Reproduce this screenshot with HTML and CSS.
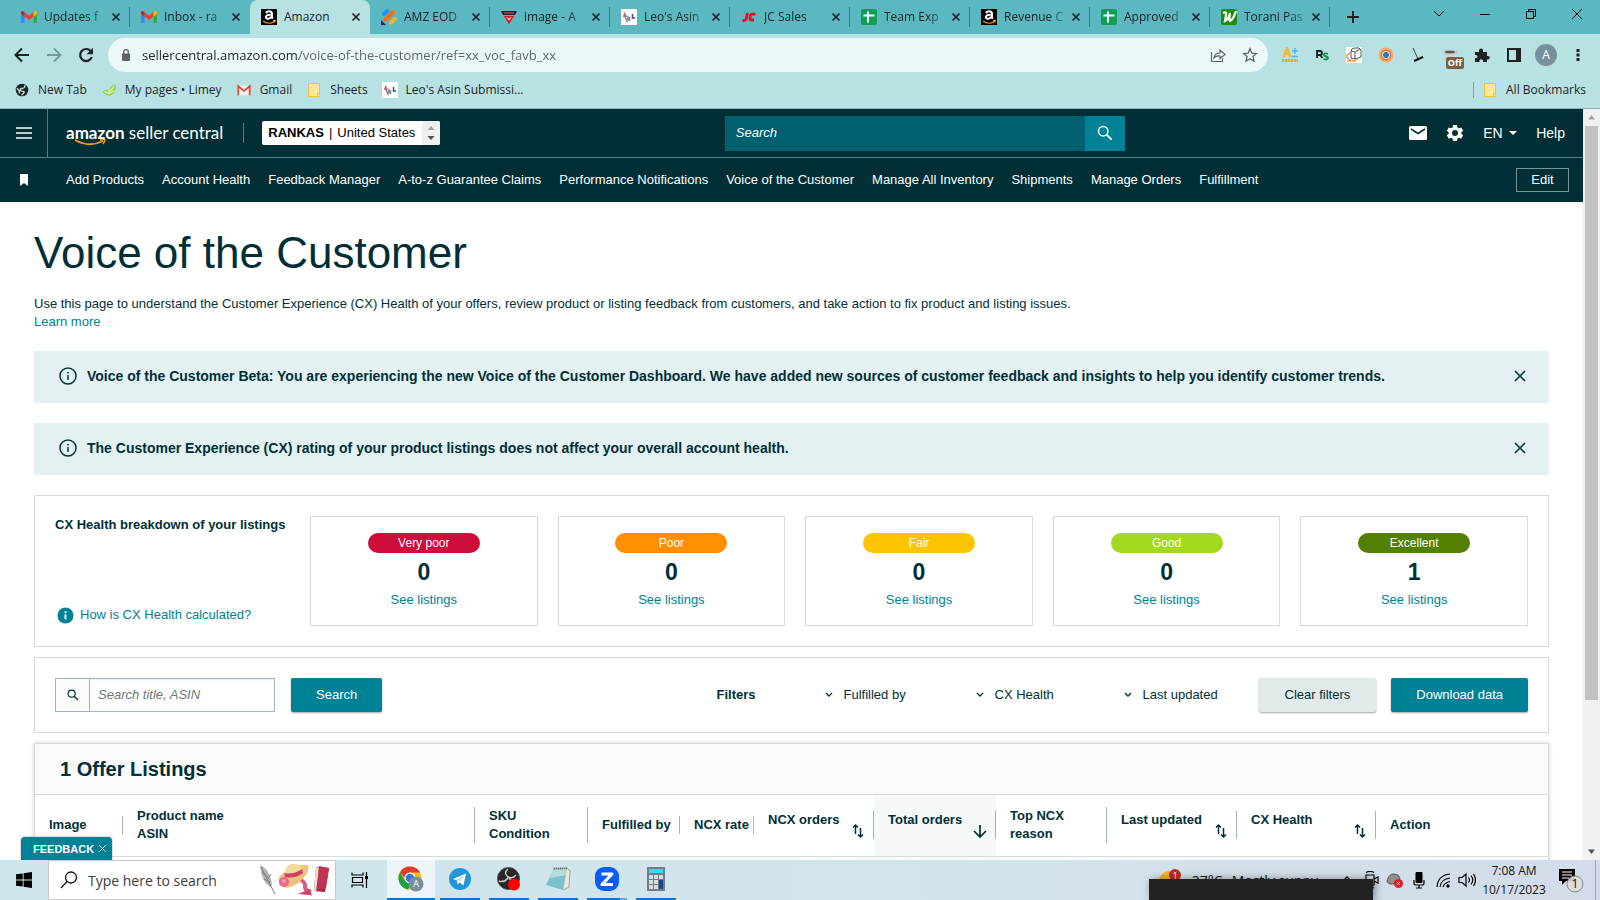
FILE: index.html
```html
<!DOCTYPE html>
<html lang="en">
<head>
    <meta charset="UTF-8">
    <meta name="viewport" content="width=device-width, initial-scale=1.0">
    <title>Amazon</title>
    <link rel="stylesheet" href="styles.css">
</head>
<body>
    <!-- shared icons -->
    <svg class="sprite" aria-hidden="true">
        <symbol id="i-gmail" viewBox="0 0 16 12">
            <path d="M0 1.5V11a1 1 0 0 0 1 1h2.600V5.200z" fill="#4285f4"/>
            <path d="M16 1.500V11a1 1 0 0 1-1 1h-2.600V5.200z" fill="#34a853"/>
            <path d="M12.400 1.700V5.800L16 3V1.500C16 .2 14.600-.5 13.500.4z" fill="#fbbc04"/>
            <path d="M3.600 5.800V1.200L8 4.500l4.400-3.300v4.600L8 9z" fill="#ea4335"/>
            <path d="M0 1.500V3l3.600 2.800V1.200L2.500.4C1.400-.5 0 .2 0 1.500z" fill="#c5221f"/>
        </symbol>
        <symbol id="i-amazon" viewBox="0 0 16 16">
            <path d="M0 0h16v16H0z" fill="#000"/>
            <path d="M5.200 4.300c.3-1.300 1.300-2 2.900-2 1.800 0 2.900.9 2.900 2.500v3.800l.8 1" fill="none" stroke="#fff" stroke-width="2"/>
            <path d="M9.800 5.800c-3 0-4.800.6-4.800 2.300 0 2.400 4.300 2.200 5-.5" fill="none" stroke="#fff" stroke-width="2"/>
            <path d="M2 12c3.500 2.700 8 2.700 11.500.4M12 11.600l2.200-.1-.6 2" fill="none" stroke="#f90" stroke-width="1.200"/>
        </symbol>
        <symbol id="i-sheet" viewBox="0 0 16 16">
            <rect width="16" height="16" rx="2" fill="#0f9d58"/>
            <path d="M2.500 6.500h11M7 2.500v11" stroke="#fff" stroke-width="2"/>
        </symbol>
        <symbol id="i-leo" viewBox="0 0 16 16">
            <path d="M0 0h16v16H0z" fill="#fff"/>
            <path d="M2 8l1.500-5L6 8z" fill="#e0434b"/>
            <path d="M3 6l3 6 1-4 1.500 4V8" fill="none" stroke="#8a8a93" stroke-width="1.500"/>
            <path d="M11.500 5v4H14" fill="none" stroke="#2c4ea0" stroke-width="1.500"/>
        </symbol>
        <symbol id="i-x" viewBox="0 0 10 10"><path d="M1.500 1.500l7 7m0-7l-7 7" stroke="currentColor" stroke-width="1.700"/></symbol>
        <symbol id="i-folder" viewBox="0 0 12 14">
            <path d="M.5.5h11v9.500h-1v3.500H.5z" fill="#ffe694" stroke="#e9c44c"/>
            <path d="M9.500 13.500v-3h2v3z" fill="#ffe694" stroke="#e9c44c"/>
        </symbol>
        <symbol id="i-search" viewBox="0 0 16 16"><circle cx="6.200" cy="6.200" r="4.700" fill="none" stroke="currentColor" stroke-width="1.500"/><path d="M9.600 9.600l5 5" stroke="currentColor" stroke-width="1.800"/></symbol>
        <symbol id="i-info" viewBox="0 0 18 18"><circle cx="9" cy="9" r="8" fill="none" stroke="currentColor" stroke-width="1.500"/><path d="M9 8v5M9 5v1.500" stroke="currentColor" stroke-width="1.500"/></symbol>
        <symbol id="i-close" viewBox="0 0 14 14"><path d="M2 2l10 10m0-10L2 12" stroke="currentColor" stroke-width="1.500"/></symbol>
        <symbol id="i-down" viewBox="0 0 8 6"><path d="M1 1l3 3 3-3" fill="none" stroke="currentColor" stroke-width="1.300"/></symbol>
        <symbol id="i-sort" viewBox="0 0 12 16"><path d="M3.500 11V2M1 4.500L3.500 2 6 4.500M8.500 5v9M6 11.500L8.500 14l2.500-2.500" fill="none" stroke="currentColor" stroke-width="1.500"/></symbol>
    </svg>

    <header class="browser">
        <div class="tabstrip">
            <div class="tab"><svg class="fav short"><use href="#i-gmail"/></svg><span class="tab-title">Updates f</span><button class="tab-close" aria-label="Close tab"><svg><use href="#i-x"/></svg></button></div>
            <div class="tab before-active"><svg class="fav short"><use href="#i-gmail"/></svg><span class="tab-title">Inbox - ra</span><button class="tab-close" aria-label="Close tab"><svg><use href="#i-x"/></svg></button></div>
            <div class="tab active"><svg class="fav"><use href="#i-amazon"/></svg><span class="tab-title">Amazon</span><button class="tab-close" aria-label="Close tab"><svg><use href="#i-x"/></svg></button></div>
            <div class="tab">
                <svg class="fav" viewBox="0 0 16 16"><g stroke-width="4" stroke-linecap="round"><path d="M3 5l3-3" stroke="#1e96fc"/><path d="M4.500 10.500L12 3" stroke="#ff6a13"/><path d="M10 13.500l3.500-3.500" stroke="#ffb224"/></g><path d="M0 11l5 5H0z" fill="#16206b"/></svg>
                <span class="tab-title">AMZ EOD</span><button class="tab-close" aria-label="Close tab"><svg><use href="#i-x"/></svg></button>
            </div>
            <div class="tab">
                <svg class="fav" viewBox="0 0 16 16"><path d="M0 2h16l-2 4H2z" fill="#2b1a24"/><path d="M3 7h10l-5 8z" fill="#e8101c"/><path d="M3 4h10" stroke="#e46a78"/><path d="M6 8l2 3 2-3" fill="none" stroke="#fff"/></svg>
                <span class="tab-title">image - A</span><button class="tab-close" aria-label="Close tab"><svg><use href="#i-x"/></svg></button>
            </div>
            <div class="tab"><svg class="fav"><use href="#i-leo"/></svg><span class="tab-title">Leo's Asin</span><button class="tab-close" aria-label="Close tab"><svg><use href="#i-x"/></svg></button></div>
            <div class="tab">
                <svg class="fav" viewBox="0 0 16 16"><path d="M6.500 4L5 10.500q-.4 1.500-3.500 1M14.500 5.200H11q-1.500.2-2 3-.4 2.700 1.200 2.800H13" fill="none" stroke="#e0141e" stroke-width="2.800"/></svg>
                <span class="tab-title">JC Sales</span><button class="tab-close" aria-label="Close tab"><svg><use href="#i-x"/></svg></button>
            </div>
            <div class="tab"><svg class="fav"><use href="#i-sheet"/></svg><span class="tab-title">Team Exp</span><button class="tab-close" aria-label="Close tab"><svg><use href="#i-x"/></svg></button></div>
            <div class="tab"><svg class="fav"><use href="#i-amazon"/></svg><span class="tab-title">Revenue C</span><button class="tab-close" aria-label="Close tab"><svg><use href="#i-x"/></svg></button></div>
            <div class="tab"><svg class="fav"><use href="#i-sheet"/></svg><span class="tab-title">Approved</span><button class="tab-close" aria-label="Close tab"><svg><use href="#i-x"/></svg></button></div>
            <div class="tab">
                <svg class="fav" viewBox="0 0 16 16"><rect width="16" height="16" rx="2" fill="#1d8a12"/><path d="M2 4q4-2 3 2l-1 6q4-2 5-8-1 5 0 8 3-1 6-10" fill="none" stroke="#fff" stroke-width="2.200"/></svg>
                <span class="tab-title">Torani Pas</span><button class="tab-close" aria-label="Close tab"><svg><use href="#i-x"/></svg></button>
            </div>
            <button class="new-tab" aria-label="New tab"><svg viewBox="0 0 14 14"><path d="M7 1v12M1 7h12" stroke="currentColor" stroke-width="2"/></svg></button>
            <div class="window-buttons">
                <button aria-label="Search tabs"><svg viewBox="0 0 12 12"><path d="M1 3l5 5 5-5" fill="none" stroke="currentColor"/></svg></button>
                <button aria-label="Minimize"><svg viewBox="0 0 12 12"><path d="M1 6.500h10" stroke="currentColor"/></svg></button>
                <button aria-label="Restore"><svg viewBox="0 0 12 12"><path d="M1.500 3.500h7v7h-7zM3.500 3.500v-2h7v7h-2" fill="none" stroke="currentColor"/></svg></button>
                <button aria-label="Close"><svg viewBox="0 0 12 12"><path d="M1 1l10 10m0-10L1 11" stroke="currentColor"/></svg></button>
            </div>
        </div>

        <div class="toolbar">
            <button aria-label="Back"><svg viewBox="0 0 16 16"><path d="M15 8H2M8 1.500L1.500 8 8 14.500" fill="none" stroke="currentColor" stroke-width="2"/></svg></button>
            <button class="disabled" aria-label="Forward"><svg viewBox="0 0 16 16"><path d="M1 8h13M8 1.500L14.500 8 8 14.500" fill="none" stroke="currentColor" stroke-width="1.800"/></svg></button>
            <button aria-label="Reload"><svg viewBox="0 0 16 16"><path d="M13.800 10A6 6 0 1 1 12.600 4" fill="none" stroke="currentColor" stroke-width="2.200"/><path d="M15 .8v6.400H8.600z" fill="currentColor"/></svg></button>
            <div class="omnibox">
                <svg class="lock" viewBox="0 0 10 12"><path d="M1 4.500h8V11a1 1 0 0 1-1 1H2a1 1 0 0 1-1-1z" fill="currentColor"/><path d="M2.700 5V3a2.300 2.300 0 0 1 4.600 0v2" fill="none" stroke="currentColor" stroke-width="1.300"/></svg>
                <input class="url" type="text" aria-label="Address" value="sellercentral.amazon.com/voice-of-the-customer/ref=xx_voc_favb_xx">
                <button aria-label="Share"><svg viewBox="0 0 16 16"><path d="M1.500 5v9.500h11V11M4 11q.5-5 6-5V3l5 4.500-5 4V9Q6 8.500 4 11z" fill="none" stroke="currentColor" stroke-width="1.200"/></svg></button>
                <button aria-label="Bookmark this tab"><svg viewBox="0 0 16 16"><path d="M8 1.800l1.800 4.300 4.700.4-3.600 3.100 1.100 4.600-4-2.500-4 2.500 1.100-4.600L1.500 6.500l4.700-.4z" fill="none" stroke="currentColor" stroke-width="1.300"/></svg></button>
            </div>
            <div class="extensions">
                <button aria-label="A plus Scout"><svg viewBox="0 0 16 16"><path d="M1.500 10L5 1.500 8.500 10M2.800 7h4.400" fill="none" stroke="#fbb52b" stroke-width="2.400"/><path d="M10 4h6M13 1v6M10 9.500h6" stroke="#4cbbe5" stroke-width="1.500"/><path d="M0 13.500h16" stroke="#f5a52a" stroke-width="3" stroke-dasharray="2.500 .5"/></svg></button>
                <button aria-label="RevSeller"><svg viewBox="0 0 16 16"><path d="M3 11V4h3q2 0 2 2t-2 2H3m3 0l2.500 3" fill="none" stroke="#1b1b1b" stroke-width="1.800"/><path d="M14 7q-4-1.500-4 .8 0 1.500 2 1.700 2.200.2 2 1.800-.5 2-4.500.7" fill="none" stroke="#0b9447" stroke-width="1.800"/></svg></button>
                <button aria-label="Box price"><svg viewBox="0 0 16 16"><path d="M0 0h16v16H0z" fill="#fff"/><path d="M5 4q0-3 4-3 5-1 6 2v7l-6 2-4-1zM5 4l4 1 5-3M9 5v7" fill="none" stroke="#555"/><path d="M4 6Q0 8 1 11q5 5 11 1M1 14h8" fill="none" stroke="#f3a14a" stroke-width="1.500"/></svg></button>
                <button aria-label="Color picker"><svg viewBox="0 0 16 16"><circle cx="8" cy="8" r="7.500" fill="#f7a96a"/><circle cx="8" cy="8" r="5.500" fill="#f4802f"/><circle cx="8" cy="8" r="3.700" fill="#fff"/><circle cx="8" cy="8" r="3" fill="#1a7fc4"/></svg></button>
                <button aria-label="Sweeper"><svg viewBox="0 0 16 16"><path d="M3 1l5 11" stroke="#444"/><path d="M4 14l9-4" stroke="#111" stroke-width="2"/></svg></button>
                <button class="with-badge" aria-label="Keepa"><svg viewBox="0 0 16 16"><path d="M2 4h12l-1 10H3z" fill="#d3d3d3"/><ellipse cx="8" cy="5" rx="7.500" ry="2.500" fill="#c2c2c2"/><ellipse cx="8" cy="5" rx="5" ry="1.300" fill="#555"/></svg><span class="badge">Off</span></button>
                <button aria-label="Extensions"><svg viewBox="0 0 16 16"><path d="M1 5h4V3.500a2 2 0 0 1 4 0V5h4v4h1a1.700 1.700 0 0 1 0 3.500h-1V15H9v-1a1.800 1.800 0 0 0-3.600 0v1H1v-4h1a1.500 1.500 0 0 0 0-3H1z" fill="currentColor"/></svg></button>
                <button aria-label="Side panel"><svg viewBox="0 0 16 16"><path d="M2 2h12v12H2z" fill="none" stroke="currentColor" stroke-width="2"/><path d="M10 2h4v12h-4z" fill="currentColor"/></svg></button>
                <button class="profile" aria-label="Profile">A</button>
                <button aria-label="Menu"><svg viewBox="0 0 16 16"><path d="M6.500 2h3v3h-3zM6.500 6.500h3v3h-3zM6.500 11h3v3h-3z" fill="currentColor"/></svg></button>
            </div>
        </div>

        <nav class="bookmarks" aria-label="Bookmarks">
            <a href="#"><svg viewBox="0 0 16 16"><circle cx="8" cy="8" r="7.200" fill="#202124"/><path d="M11 2.500q1 3-2 3.500-3 0-3 2 1 2 3.500 1.500 2 .5 0 2.500l-2 2M2 6l3 3v3" fill="none" stroke="#b8e1e4" stroke-width="1.600"/></svg>New Tab</a>
            <a href="#"><svg viewBox="0 0 16 16"><path d="M1 10Q7 9 14.500 1.500 17 8 12 12.500 6 16 1 10z" fill="#a6db5d" stroke="#8bca47"/><path d="M8 12l6-9M8 12l6-3M8 12V6M8 12L3 10" stroke="#e8f7d4"/></svg>My pages • Limey</a>
            <a href="#"><svg viewBox="0 0 16 16"><path d="M1 3h14v11H1z" fill="#f1f1f1"/><path d="M1.500 14V3.500L8 9l6.500-5.500V14" fill="none" stroke="#e04436" stroke-width="2"/></svg>Gmail</a>
            <a href="#"><svg><use href="#i-folder"/></svg>Sheets</a>
            <a href="#"><svg class="square"><use href="#i-leo"/></svg>Leo's Asin Submissi...</a>
            <a class="all-bookmarks" href="#"><svg><use href="#i-folder"/></svg>All Bookmarks</a>
        </nav>
    </header>

    <div class="viewport">
        <div class="page">
            <div class="sc-header">
                <button class="sc-menu" aria-label="Menu"><svg viewBox="0 0 16 12"><path d="M0 1h16M0 6h16M0 11h16" stroke="currentColor" stroke-width="1.500"/></svg></button>
                <a class="logo" href="#"><b>amazon</b> seller central
                    <svg viewBox="0 0 34 8"><path d="M1 1q14 8 28 1" fill="none" stroke="#f90" stroke-width="1.800"/><path d="M26 1q5-1 5 0t-2 4" fill="none" stroke="#f90" stroke-width="1.400"/></svg>
                </a>
                <label class="account"><b>RANKAS</b><span class="bar">|</span>
                    <select><option>United States</option></select>
                    <span class="spin"><svg viewBox="0 0 8 16"><path d="M4 1l3.500 4h-7z" fill="#a3a3a3"/><path d="M4 15l3.500-4h-7z" fill="#505050"/></svg></span>
                </label>
                <form class="sc-search">
                    <input type="text" placeholder="Search" aria-label="Search">
                    <button type="button" aria-label="Search"><svg><use href="#i-search"/></svg></button>
                </form>
                <div class="sc-tools">
                    <button aria-label="Messages"><svg viewBox="0 0 18 18"><rect y="2" width="18" height="14" rx="1.500" fill="currentColor"/><path d="M2 5l7 4.500L16 5" fill="none" stroke="#002f36" stroke-width="1.500"/></svg></button>
                    <button aria-label="Settings"><svg viewBox="0 0 18 18"><path d="M7 1h4l.4 2.400 1.500.9 2.300-.9 2 3.400-1.900 1.500v1.500l1.900 1.500-2 3.400-2.300-.9-1.500.9L11 17H7l-.4-2.300-1.500-.9-2.300.9-2-3.400 1.900-1.500V8.300L.8 6.800l2-3.400 2.300.9 1.500-.9z" fill="currentColor"/><circle cx="9" cy="9" r="3" fill="#002f36"/></svg></button>
                    <div class="lang"><select aria-label="Language"><option>EN</option></select><svg viewBox="0 0 8 4"><path d="M0 0h8L4 4z" fill="currentColor"/></svg></div>
                    <a href="#">Help</a>
                </div>
            </div>

            <nav class="sc-nav" aria-label="Favorites">
                <svg class="mark" viewBox="0 0 10 12"><path d="M1 0h8v12L5 9l-4 3z" fill="currentColor"/></svg>
                <a href="#">Add Products</a>
                <a href="#">Account Health</a>
                <a href="#">Feedback Manager</a>
                <a href="#">A-to-z Guarantee Claims</a>
                <a href="#">Performance Notifications</a>
                <a href="#">Voice of the Customer</a>
                <a href="#">Manage All Inventory</a>
                <a href="#">Shipments</a>
                <a href="#">Manage Orders</a>
                <a href="#">Fulfillment</a>
                <button class="edit">Edit</button>
            </nav>

            <main>
                <h1>Voice of the Customer</h1>
                <p class="intro">Use this page to understand the Customer Experience (CX) Health of your offers, review product or listing feedback from customers, and take action to fix product and listing issues.<br><a href="#">Learn more</a></p>

                <div class="alert">
                    <svg><use href="#i-info"/></svg>
                    <strong>Voice of the Customer Beta: You are experiencing the new Voice of the Customer Dashboard. We have added new sources of customer feedback and insights to help you identify customer trends.</strong>
                    <button aria-label="Dismiss"><svg><use href="#i-close"/></svg></button>
                </div>
                <div class="alert">
                    <svg><use href="#i-info"/></svg>
                    <strong>The Customer Experience (CX) rating of your product listings does not affect your overall account health.</strong>
                    <button aria-label="Dismiss"><svg><use href="#i-close"/></svg></button>
                </div>

                <section class="panel health">
                    <div class="health-intro">
                        <strong>CX Health breakdown of your listings</strong>
                        <a href="#"><svg viewBox="0 0 18 18"><circle cx="9" cy="9" r="8.500" fill="currentColor"/><path d="M9 8v5M9 4.500v2" stroke="#fff" stroke-width="2"/></svg>How is CX Health calculated?</a>
                    </div>
                    <div class="card"><span class="pill very-poor">Very poor</span><b>0</b><a href="#">See listings</a></div>
                    <div class="card"><span class="pill poor">Poor</span><b>0</b><a href="#">See listings</a></div>
                    <div class="card"><span class="pill fair">Fair</span><b>0</b><a href="#">See listings</a></div>
                    <div class="card"><span class="pill good">Good</span><b>0</b><a href="#">See listings</a></div>
                    <div class="card"><span class="pill excellent">Excellent</span><b>1</b><a href="#">See listings</a></div>
                </section>

                <section class="panel filters">
                    <label class="search-box">
                        <span><svg><use href="#i-search"/></svg></span>
                        <input type="text" placeholder="Search title, ASIN" aria-label="Search title, ASIN">
                    </label>
                    <button class="btn primary">Search</button>
                    <strong>Filters</strong>
                    <label class="filter"><svg><use href="#i-down"/></svg><select aria-label="Fulfilled by"><option>Fulfilled by</option></select></label>
                    <label class="filter"><svg><use href="#i-down"/></svg><select aria-label="CX Health"><option>CX Health</option></select></label>
                    <label class="filter"><svg><use href="#i-down"/></svg><select aria-label="Last updated"><option>Last updated</option></select></label>
                    <button class="btn clear">Clear filters</button>
                    <button class="btn primary">Download data</button>
                </section>

                <section class="offers">
                    <h2>1 Offer Listings</h2>
                    <table>
                        <thead>
                            <tr>
                                <th class="c-image"><div>Image</div></th>
                                <th><div>Product name<br>ASIN</div></th>
                                <th class="c-sku"><div>SKU<br>Condition</div></th>
                                <th class="c-fulfilled"><div>Fulfilled by</div></th>
                                <th class="c-rate"><div>NCX rate</div></th>
                                <th class="c-orders"><div><button class="sort">NCX orders<svg><use href="#i-sort"/></svg></button></div></th>
                                <th class="c-total sorted"><div><button class="sort">Total orders<svg viewBox="0 0 14 16"><path d="M7 2v12M1 8l6 6 6-6" fill="none" stroke="currentColor" stroke-width="1.700"/></svg></button></div></th>
                                <th class="c-reason"><div>Top NCX<br>reason</div></th>
                                <th class="c-updated"><div><button class="sort">Last updated<svg><use href="#i-sort"/></svg></button></div></th>
                                <th class="c-health"><div><button class="sort">CX Health<svg><use href="#i-sort"/></svg></button></div></th>
                                <th class="c-action"><div>Action</div></th>
                            </tr>
                        </thead>
                    </table>
                </section>
            </main>
        </div>
        <div class="scrollbar" aria-hidden="true">
            <svg viewBox="0 0 17 17"><path d="M8.500 6l3.500 4.500H5z" fill="#a3a3a3"/></svg>
            <div class="track"><div class="thumb"></div></div>
            <svg viewBox="0 0 17 17"><path d="M8.500 11L5 6.500h7z" fill="#505050"/></svg>
        </div>
        <button class="feedback">FEEDBACK <svg><use href="#i-close"/></svg></button>
    </div>

    <footer class="taskbar">
        <button class="start" aria-label="Start"><svg viewBox="0 0 16 16"><path d="M0 2.300L6.700 1.400v6.100H0zM7.600 1.200L16 0v7.500H7.600zM0 8.400h6.700v6.200L0 13.700zM7.600 8.400H16V16l-8.400-1.200z" fill="#000"/></svg></button>
        <label class="win-search">
            <svg class="glass" viewBox="0 0 18 18"><circle cx="11" cy="6.500" r="5.500" fill="none" stroke="#111" stroke-width="1.300"/><path d="M7 10.500l-6 6.500" stroke="#111" stroke-width="1.300"/></svg>
            <input type="text" placeholder="Type here to search" aria-label="Type here to search">
            <svg class="art" viewBox="0 0 72 34">
                <path d="M1 2q10 4 12 20l-2 2Q2 18 1 2z" fill="#b3b3b3"/><path d="M2 4l14 27M3 10l6 4M5 16l6 3M12 11l-3 5" stroke="#7d7d7d" fill="none"/>
                <path d="M38 15q9 4 8 8t6 6" fill="none" stroke="#dc5a80" stroke-width="4"/>
                <path d="M20 19Q18 13 26 9q5-9 14-7 5-1 10 1-1 10-11 17-12 9-19 1z" fill="#edc27b"/>
                <path d="M26 8q2-8 9-7 7 0 8 5-7 7-17 5z" fill="#f7d99a"/><path d="M25 10q9 2 18-4l1 4q-8 6-18 4z" fill="#cf3f66"/>
                <circle cx="25" cy="19" r="5" fill="#e96a83"/><circle cx="25" cy="18" r="2" fill="#f5a0ac"/>
                <path d="M39 31l12-5-1 6zM51 27l2 6-8-4" fill="#c94068"/>
                <path d="M57 4l13 1-4 24-11-1z" fill="#a82343"/><path d="M57 4l3 1-3 24-2-1z" fill="#eee3c8"/><path d="M60 3l10 2-3 20-9 2z" fill="#c13355"/>
            </svg>
        </label>
        <button class="task-view" aria-label="Task view"><svg viewBox="0 0 18 16"><path d="M1 .5V3h11V.5M1 15.500V13h11v2.500M1.500 5.500h10v5h-10zM15.500 0v16" fill="none" stroke="#000" stroke-width="1.200"/><path d="M14 4h3v3h-3z" fill="#000"/></svg></button>
        <div class="apps">
            <button class="app current" aria-label="Chrome"><svg viewBox="0 0 26 26"><circle cx="12" cy="12" r="11.500" fill="#fbc116"/><path d="M2 6.200A11.500 11.500 0 0 1 22 6.500H12q-5 .5-5.500 5z" fill="#e33b2e"/><path d="M2 6.200l5 8.500q2 3 6 2.500l-3 6.200A11.500 11.500 0 0 1 2 6.200z" fill="#23a047"/><circle cx="12" cy="12" r="5.400" fill="#fff"/><circle cx="12" cy="12" r="4.300" fill="#3179e3"/><circle cx="18" cy="18" r="7.500" fill="#78909c"/><text x="18" y="21" class="mini">A</text></svg></button>
            <button class="app" aria-label="Telegram"><svg viewBox="0 0 26 26"><circle cx="13" cy="13" r="11" fill="#2397d4"/><path d="M6 13l13-5.500-2.500 12-4-3-2 2-.5-4z" fill="#fff"/><path d="M10 14.500l6-4-4.500 5.500" fill="none" stroke="#9ccbe8"/></svg></button>
            <button class="app" aria-label="OBS"><svg viewBox="0 0 26 26"><circle cx="12.500" cy="12.500" r="11" fill="#26252a" stroke="#4d4d52"/><path d="M12 3q-5 4 0 8 5 2 8-2M12 12q-4 5-9 3M13 12q5 4 2 10" fill="none" stroke="#c9c9c9" stroke-width="1.500"/><circle cx="18" cy="18.500" r="6" fill="#f00"/></svg></button>
            <button class="app" aria-label="Notepad"><svg viewBox="0 0 26 26"><path d="M8 3l14-1 3 3-1 16-6 3z" fill="#eee9d8" stroke="#a6a08c"/><path d="M9 3l13 1-4 20-17-5z" fill="#7cc0cb"/><path d="M9 3l13 1-1 5L5 12z" fill="#b5dde1"/><path d="M9 2.500h13" stroke="#606a70" stroke-dasharray="1 1" stroke-width="2"/></svg></button>
            <button class="app split" aria-label="Zoom"><svg viewBox="0 0 26 26"><rect x="1" y="1" width="24" height="24" rx="9" fill="#0b5cff"/><path d="M7.500 8h10.500l-10 10.500h11" fill="none" stroke="#fff" stroke-width="3.200" stroke-linejoin="round"/></svg></button>
            <button class="app" aria-label="Calculator"><svg viewBox="0 0 26 26"><path d="M4 1h18v24H4z" fill="#747c85"/><path d="M6 3h14v4H6z" fill="#45d3f5"/><path d="M6 9h4v4H6zM11 9h4v4h-4zM16 9h4v4h-4zM6 14h4v4H6zM11 14h4v4h-4zM6 19h4v4H6zM11 19h4v4h-4z" fill="#d6dbe0"/><path d="M16 14h4v9h-4z" fill="#12498c"/></svg></button>
        </div>
        <div class="tray">
            <button class="weather"><svg viewBox="0 0 24 22"><circle cx="10" cy="12" r="10" fill="#f7b52c"/><circle cx="16" cy="6" r="6" fill="#c42b1c"/><text x="16" y="10" class="mini">1</text></svg><span>27°C</span><span>Mostly sunny</span></button>
            <svg class="tray-icon" viewBox="0 0 18 18"><path d="M4 11l5-5 5 5" fill="none" stroke="#000" stroke-width="1.300"/></svg>
            <svg class="tray-icon" viewBox="0 0 18 18"><path d="M4 4h8v10H4zM12 8l4-2v6l-4-2M4 1.500q4-2 8 0M4 16.500q4 2 8 0" fill="none" stroke="#000" stroke-width="1.200"/></svg>
            <svg class="tray-icon" viewBox="0 0 18 18"><path d="M4 13q-4-1-2.500-4.500Q3 3 8 3q5 0 6 4l-3 6z" fill="#8f8f8f" stroke="#555"/><circle cx="12.500" cy="12.500" r="4.500" fill="#e01b24"/><path d="M11 11l3 3m0-3l-3 3" stroke="#fff"/></svg>
            <svg class="tray-icon" viewBox="0 0 18 18"><rect x="5.500" y="1" width="7" height="11" rx="1" fill="#000"/><path d="M4 9v3q0 2 2 2h6q2 0 2-2V9M9 14v3M6 17h6" fill="none" stroke="#000" stroke-width="1.200"/></svg>
            <svg class="tray-icon" viewBox="0 0 18 18"><path d="M3 16Q4 4 16 3M6 16q1-8 10-9M9 16q1-4 7-5.500" fill="none" stroke="#000" stroke-width="1.200"/><circle cx="14" cy="15" r="1.700" fill="#000"/></svg>
            <svg class="tray-icon" viewBox="0 0 18 18"><path d="M1 6.500h3L8 3v12l-4-3.500H1zM10.500 6.500q2 2.500 0 5M13 4.500q3.500 4.500 0 9M15.500 3q4 6 0 12" fill="none" stroke="#000" stroke-width="1.200"/></svg>
            <div class="clock">7:08 AM<br>10/17/2023</div>
            <button class="notify" aria-label="Notifications"><svg viewBox="0 0 26 26"><path d="M1 2h16v12H8l-4 4v-4H1z" fill="#000"/><path d="M4 5h10M4 8h10M4 11h7" stroke="#fff"/><circle cx="17" cy="17" r="8" fill="#dcdcdc" fill-opacity=".9" stroke="#888"/><text x="17" y="21" class="count">1</text></svg></button>
        </div>
        <div class="overlay-window"></div>
    </footer>
</body>
</html>
```
FILE: styles.css
```css
:root {
    --ink: #002f36;
    --teal: #008296;
    --line: #d5dbdb;
    --chrome: #b8e1e4;
    --strip: #5bb8c1;
}

* {
    box-sizing: border-box;
}

body {
    margin: 0;
    height: 100vh;
    display: flex;
    flex-direction: column;
    overflow: hidden;
    background: #fff;
    color: var(--ink);
    font: 13px/18px "Liberation Sans", Arial, sans-serif;
}

button,
input,
select {
    font: inherit;
    color: inherit;
    margin: 0;
    padding: 0;
    border: 0;
    background: none;
    border-radius: 0;
}

select {
    appearance: none;
    cursor: pointer;
}

button {
    display: flex;
    align-items: center;
    justify-content: center;
    cursor: pointer;
}

a {
    color: var(--teal);
    text-decoration: none;
}

svg {
    flex: none;
    width: 16px;
    height: 16px;
}

.sprite {
    position: absolute;
    width: 0;
    height: 0;
}

/* browser chrome */
.browser {
    flex: none;
    background: var(--chrome);
    color: #202124;
    font: 12px/16px "Open Sans", "Noto Sans", sans-serif;
    border-bottom: 1px solid #8fb0b3;
}

.tabstrip {
    display: flex;
    height: 34px;
    padding-left: 10px;
    background: var(--strip);
}

.tab {
    flex: 0 1 120px;
    min-width: 0;
    display: flex;
    align-items: center;
    padding: 0 8px 0 11px;
    background: linear-gradient(#3d7d84, #3d7d84) right center / 1px 20px no-repeat;
}

.tab.before-active {
    background: none;
}

.tab.active {
    background: var(--chrome);
    border-radius: 8px 8px 0 0;
}

.fav {
    margin-right: 7px;
}

.fav.short {
    height: 12px;
}

.tab-title {
    flex: 1;
    white-space: nowrap;
    mask-image: linear-gradient(to right, #000 70%, rgba(0, 0, 0, 0.2));
}

.tab.active .tab-title {
    mask-image: none;
}

.tab-close {
    width: 12px;
    height: 16px;
    margin-left: 4px;
}

.tab-close svg {
    width: 10px;
    height: 10px;
}

.new-tab {
    width: 46px;
}

.new-tab svg {
    width: 14px;
    height: 14px;
}

.window-buttons {
    display: flex;
    margin-left: auto;
    height: 28px;
    color: #000;
}

.window-buttons button {
    width: 46px;
}

.window-buttons svg {
    width: 12px;
    height: 12px;
}

.toolbar {
    display: flex;
    align-items: center;
    height: 42px;
    padding-left: 6px;
}

.toolbar > button {
    width: 32px;
    height: 32px;
}

.toolbar .disabled {
    color: #74989c;
}

.omnibox {
    flex: 1;
    display: flex;
    align-items: center;
    height: 34px;
    margin-left: 6px;
    padding: 0 2px 0 13px;
    border-radius: 17px;
    background: #ebf8f9;
    color: #5f6368;
}

.omnibox button {
    width: 32px;
}

.lock {
    width: 10px;
    height: 12px;
    margin-right: 11px;
}

.url {
    flex: 1;
    font-size: 13px;
    color: #202124;
    background: linear-gradient(to right, #202124 157px, #5f6368 157px);
    background-clip: text;
    -webkit-text-fill-color: transparent;
}

.extensions {
    display: flex;
    align-items: center;
    padding: 0 6px;
}

.extensions button {
    width: 32px;
    height: 32px;
}

.with-badge {
    position: relative;
}

.badge {
    position: absolute;
    right: 2px;
    bottom: 2px;
    padding: 0 2px;
    border-radius: 2px;
    background: #7b6044;
    color: #fff;
    font: bold 9px/12px "Open Sans", sans-serif;
}

.extensions .profile {
    width: 22px;
    height: 22px;
    margin: 0 5px;
    border-radius: 50%;
    background: #78909c;
    color: #fff;
}

.bookmarks {
    display: flex;
    align-items: center;
    height: 32px;
    padding: 0 14px 4px;
    gap: 14px;
}

.bookmarks a {
    display: flex;
    align-items: center;
    gap: 8px;
    color: #202124;
}

.bookmarks svg {
    height: 14px;
}

.bookmarks .square {
    height: 16px;
}

.bookmarks .all-bookmarks {
    margin-left: auto;
    padding-left: 8px;
    border-left: 1px solid #7fa3a6;
}

/* seller central */
.viewport {
    flex: 1;
    min-height: 0;
    display: flex;
    position: relative;
}

.page {
    flex: 1;
    min-width: 0;
    overflow: hidden;
}

.sc-header {
    display: flex;
    align-items: center;
    height: 49px;
    background: var(--ink);
    color: #fff;
    border-bottom: 1px solid #5c7a7e;
}

.sc-menu {
    width: 48px;
    height: 48px;
    border-right: 1px solid #5c7a7e;
}

.sc-menu svg {
    height: 12px;
}

.logo {
    position: relative;
    margin-left: 18px;
    padding-right: 20px;
    border-right: 1px solid #5c7a7e;
    color: #fff;
    font: 17px/20px Lato, sans-serif;
}

.logo svg {
    position: absolute;
    left: 8px;
    top: 16px;
    width: 34px;
    height: 8px;
}

.account {
    display: flex;
    align-items: center;
    height: 24px;
    margin-left: 18px;
    padding-left: 6px;
    border-radius: 2px;
    background: #fff;
    color: #000;
    overflow: hidden;
}

.account .bar {
    margin: 0 5px;
}

.spin {
    display: flex;
    align-items: center;
    justify-content: center;
    width: 18px;
    height: 24px;
    margin-left: 6px;
    background: #efefef;
}

.spin svg {
    width: 8px;
}

.sc-search {
    display: flex;
    width: 400px;
    height: 35px;
    margin: 0 auto;
}

.sc-search input {
    flex: 1;
    min-width: 0;
    padding: 0 11px;
    background: #00606f;
    font-style: italic;
}

.sc-search ::placeholder {
    color: #fff;
}

.sc-search button {
    width: 40px;
    background: var(--teal);
}

.sc-tools {
    display: flex;
    align-items: center;
    gap: 19px;
    padding-right: 18px;
    font-size: 14px;
}

.sc-tools svg {
    width: 18px;
    height: 18px;
}

.sc-tools a {
    color: #fff;
}

.lang {
    display: flex;
    align-items: center;
    gap: 6px;
}

.lang option {
    color: #000;
}

.lang svg {
    width: 8px;
    height: 4px;
}

.sc-nav {
    display: flex;
    align-items: center;
    gap: 18px;
    height: 44px;
    padding: 0 14px 0 19px;
    background: var(--ink);
    color: #fff;
}

.sc-nav a {
    color: #fff;
}

.mark {
    width: 10px;
    height: 12px;
    margin-right: 19px;
}

.edit {
    width: 53px;
    height: 24px;
    margin-left: auto;
    border: 1px solid #7a9599;
}

main {
    padding: 25px 34px 0;
}

h1 {
    margin: 0;
    font-size: 44px;
    line-height: 52px;
    font-weight: normal;
}

.intro {
    margin: 16px 0 20px;
}

.alert {
    display: flex;
    align-items: center;
    gap: 10px;
    height: 52px;
    margin-bottom: 20px;
    padding: 0 20px 2px 25px;
    background: #e3f1f2;
    font-size: 14px;
}

.alert > svg {
    width: 18px;
    height: 18px;
}

.alert button {
    width: 18px;
    height: 18px;
    margin-left: auto;
}

.alert button svg {
    width: 14px;
    height: 14px;
}

.panel {
    border: 1px solid var(--line);
    margin-bottom: 10px;
    padding: 20px;
}

.health {
    display: grid;
    grid-template-columns: 235px repeat(5, 1fr);
    gap: 20px;
}

.health-intro {
    display: flex;
    flex-direction: column;
    justify-content: space-between;
    padding-bottom: 2px;
}

.health-intro a {
    display: flex;
    align-items: center;
    gap: 6px;
    padding-left: 2px;
}

.health-intro svg {
    width: 17px;
    height: 17px;
}

.card {
    display: flex;
    flex-direction: column;
    align-items: center;
    height: 110px;
    padding-top: 16px;
    border: 1px solid var(--line);
}

.card b {
    margin: 5px 0;
    font-size: 23px;
    line-height: 28px;
}

.pill {
    width: 112px;
    border-radius: 10px;
    color: #fff;
    font-size: 12px;
    line-height: 20px;
    text-align: center;
}

.very-poor { background: #cc0c39; }
.poor { background: #ff8f00; }
.fair { background: #ffc400; }
.good { background: #a2d91c; }
.excellent { background: #538000; }

.filters {
    display: flex;
    align-items: center;
}

.search-box {
    display: flex;
    width: 220px;
    height: 34px;
    margin-right: 16px;
    border: 1px solid #a2b4b5;
}

.search-box span {
    display: flex;
    align-items: center;
    justify-content: center;
    width: 34px;
    background: #fafafa;
    border-right: 1px solid #a2b4b5;
}

.search-box svg {
    width: 12px;
    height: 12px;
}

.search-box input {
    flex: 1;
    min-width: 0;
    padding: 0 8px;
    font-style: italic;
    box-shadow: inset 0 1px 2px #e3e8e8;
}

.search-box ::placeholder {
    color: #6c7778;
}

.btn {
    height: 34px;
    padding: 0 25px;
    border-radius: 2px;
    box-shadow: 0 1px 2px rgba(0, 0, 0, 0.35);
}

.primary {
    background: var(--teal);
    color: #fff;
}

.clear {
    margin: 0 15px 0 40px;
    padding: 0 26px;
    background: #e1eaeb;
}

.filters strong {
    margin-left: auto;
}

.filter {
    display: flex;
    align-items: center;
    gap: 11px;
    margin-left: 69px;
}

.filter svg {
    width: 8px;
    height: 6px;
}

.offers {
    border: 1px solid var(--line);
    box-shadow: 0 0 4px rgba(0, 0, 0, 0.2);
    min-height: 200px;
}

h2 {
    margin: 0;
    padding: 0 25px;
    background: #fafafa;
    border-bottom: 1px solid var(--line);
    font-size: 20px;
    line-height: 50px;
}

table {
    width: 100%;
    table-layout: fixed;
    border-collapse: collapse;
}

th {
    height: 61px;
    padding: 0 0 0 14px;
    border-bottom: 1px solid var(--line);
    text-align: left;
    white-space: nowrap;
}

th div {
    border-right: 1px solid #a2b4b5;
}

.c-image { width: 88px; }
.c-sku { width: 113px; }
.c-fulfilled { width: 92px; }
.c-rate { width: 74px; }
.c-orders { width: 120px; }
.c-total { width: 122px; }
.c-reason { width: 111px; }
.c-updated { width: 130px; }
.c-health { width: 139px; }
.c-action { width: 172px; }

.c-action div {
    border-right: 0;
}

.sorted {
    background: #f4f8f9;
}

.sort {
    width: 100%;
    height: 28px;
    align-items: flex-start;
    justify-content: space-between;
    padding-right: 8px;
    font-weight: bold;
}

.sort svg {
    align-self: flex-end;
    width: 14px;
}

.scrollbar {
    display: flex;
    flex-direction: column;
    width: 17px;
    background: #f1f1f1;
}

.scrollbar svg {
    width: 17px;
    height: 17px;
}

.track {
    flex: 1;
    padding: 0 2px;
}

.thumb {
    height: 80%;
    background: #c1c1c1;
}

.feedback {
    position: absolute;
    left: 21px;
    bottom: 0;
    gap: 4px;
    height: 23px;
    padding: 0 5px 0 12px;
    border-radius: 4px 4px 0 0;
    background: var(--teal);
    color: #fff;
    font-size: 11px;
    font-weight: bold;
    box-shadow: 0 0 2px #888;
}

.feedback svg {
    width: 9px;
    height: 9px;
}

/* taskbar */
.taskbar {
    flex: none;
    position: relative;
    display: flex;
    height: 40px;
    background: linear-gradient(to right, #cde5ec, #d2e4ec 55%, #d3dcea);
    color: #111;
    font: 12px/19px "Open Sans", "Noto Sans", sans-serif;
}

.start {
    width: 48px;
}

.win-search {
    display: flex;
    align-items: center;
    width: 288px;
    padding: 0 4px 0 11px;
    border: 1px solid #c4c8ca;
    background: #fff;
    font-size: 14px;
}

.win-search input {
    flex: 1;
    min-width: 0;
    margin-left: 10px;
}

.win-search ::placeholder {
    color: #3c3c3c;
}

.glass {
    width: 18px;
    height: 18px;
}

.art {
    width: 72px;
    height: 34px;
}

.task-view {
    width: 48px;
}

.task-view svg {
    width: 18px;
}

.apps {
    display: flex;
    gap: 9px;
    margin-left: 3px;
}

.app {
    width: 40px;
    border-bottom: 2px solid #0078d7;
}

.app.current {
    width: 48px;
    margin-right: -4px;
    background: #ecf5f8;
}

.app svg {
    width: 26px;
    height: 26px;
}

.split {
    border-image: linear-gradient(to right, #0078d7 80%, #5fa8e3 80%) 2;
}

.mini,
.count {
    fill: #fff;
    font-size: 9px;
    text-anchor: middle;
}

.count {
    fill: #111;
    font-size: 12px;
}

.tray {
    display: flex;
    align-items: center;
    margin-left: auto;
    padding-right: 4px;
}

.weather {
    gap: 9px;
    margin-right: 20px;
    font-size: 14px;
}

.weather svg {
    width: 24px;
    height: 22px;
}

.tray-icon {
    width: 18px;
    height: 18px;
    margin-right: 6px;
}

.clock {
    width: 64px;
    text-align: center;
}

.notify {
    width: 50px;
    height: 40px;
    border-right: 1px solid #9aa5b0;
}

.notify svg {
    width: 26px;
    height: 26px;
}

.overlay-window {
    position: absolute;
    right: 227px;
    bottom: 0;
    width: 224px;
    height: 21px;
    background: #222;
    box-shadow: 2px 0 8px rgba(0, 0, 0, 0.4);
}
```
